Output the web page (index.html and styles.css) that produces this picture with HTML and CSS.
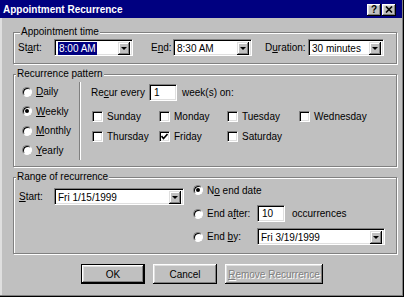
FILE: index.html
```html
<!DOCTYPE html>
<html lang="en">
<head>
    <meta charset="UTF-8">
    <meta name="viewport" content="width=device-width, initial-scale=1.0">
    <title>Appointment Recurrence</title>
    <link rel="stylesheet" href="styles.css">
</head>
<body>
    <div class="window">
        <div class="titlebar">
            <span class="title">Appointment Recurrence</span>
            <div class="title-buttons">
                <span class="tbtn">?</span>
                <span class="tbtn">
                    <svg width="8" height="7" viewBox="0 0 8 7"><path d="M1 0.5 L7 6.5 M7 0.5 L1 6.5" stroke="#000" stroke-width="1.6"/></svg>
                </span>
            </div>
        </div>

        <div class="content">
            <!-- Appointment time -->
            <div class="group">
                <div class="legend">Appointment time</div>
                <div class="time-row">
                    <span class="lbl lbl-start">St<u>a</u>rt:</span>
                    <div class="combo w79">
                        <span class="combo-text"><span class="selected">8:00 AM</span></span>
                        <span class="drop"></span>
                    </div>
                    <span class="lbl lbl-end">E<u>n</u>d:</span>
                    <div class="combo w79">
                        <span class="combo-text">8:30 AM</span>
                        <span class="drop"></span>
                    </div>
                    <span class="lbl lbl-duration">D<u>u</u>ration:</span>
                    <div class="combo w76">
                        <span class="combo-text">30 minutes</span>
                        <span class="drop"></span>
                    </div>
                </div>
            </div>

            <!-- Recurrence pattern -->
            <div class="group group-pattern">
                <div class="legend">Recurrence pattern</div>
                <div class="pattern-body">
                    <div class="freq">
                        <div class="opt"><span class="radio"></span><span><u>D</u>aily</span></div>
                        <div class="opt"><span class="radio checked"></span><span><u>W</u>eekly</span></div>
                        <div class="opt"><span class="radio"></span><span><u>M</u>onthly</span></div>
                        <div class="opt"><span class="radio"></span><span><u>Y</u>early</span></div>
                    </div>
                    <div class="sep"></div>
                    <div class="pattern-right">
                        <div class="recur-row">
                            <span class="lbl-recur">Re<u>c</u>ur every</span>
                            <div class="field w28">1</div>
                            <span class="weeks">week(s) on:</span>
                        </div>
                        <div class="days">
                            <div class="day"><span class="check"></span>Sunday</div>
                            <div class="day"><span class="check"></span>Monday</div>
                            <div class="day"><span class="check"></span>Tuesday</div>
                            <div class="day"><span class="check"></span>Wednesday</div>
                            <div class="day"><span class="check"></span>Thursday</div>
                            <div class="day">
                                <span class="check">
                                    <svg width="7" height="7" viewBox="0 0 7 7"><path d="M0.5 3 L2.5 5.5 L6.5 1" fill="none" stroke="#000" stroke-width="1.6"/></svg>
                                </span>Friday
                            </div>
                            <div class="day"><span class="check"></span>Saturday</div>
                        </div>
                    </div>
                </div>
            </div>

            <!-- Range of recurrence -->
            <div class="group group-range">
                <div class="legend">Range of recurrence</div>
                <div class="range-body">
                    <div class="range-left">
                        <span class="lbl lbl-start"><u>S</u>tart:</span>
                        <div class="combo w130">
                            <span class="combo-text">Fri 1/15/1999</span>
                            <span class="drop"></span>
                        </div>
                    </div>
                    <div class="range-right">
                        <div class="end-row row-first">
                            <span class="radio checked"></span>
                            <span>N<u>o</u> end date</span>
                        </div>
                        <div class="end-row row-after">
                            <span class="radio"></span>
                            <span class="lbl-end-opt">End a<u>f</u>ter:</span>
                            <div class="field w28">10</div>
                            <span class="occ">occurrences</span>
                        </div>
                        <div class="end-row row-by">
                            <span class="radio"></span>
                            <span class="lbl-end-opt">End <u>b</u>y:</span>
                            <div class="combo w128">
                                <span class="combo-text">Fri 3/19/1999</span>
                                <span class="drop"></span>
                            </div>
                        </div>
                    </div>
                </div>
            </div>

            <div class="buttons">
                <div class="btn default">OK</div>
                <div class="btn">Cancel</div>
                <div class="btn disabled wide"><span><u>R</u>emove Recurrence</span></div>
            </div>
        </div>
    </div>
</body>
</html>
```

FILE: styles.css
```css
body {
    margin: 0;
    font-family: "Liberation Sans", Arial, sans-serif;
    font-size: 10px;
    color: #000;
    background: #c0c0c0;
}
u {
    text-decoration: underline;
    text-underline-offset: 1px;
}
.window {
    width: 404px;
    height: 297px;
    box-sizing: border-box;
    padding: 0 2px 2px 0;
    background: #c0c0c0;
    box-shadow: inset -1px -1px 0 #000, inset -2px -2px 0 #808080, inset 2px 0 0 #dfdfdf;
}
.titlebar {
    height: 18px;
    background: #000080;
    display: flex;
    align-items: center;
    justify-content: space-between;
    padding: 0 6px 0 3px;
}
.title {
    color: #fff;
    font-weight: bold;
    font-size: 10px;
    padding-top: 1px;
}
.title-buttons {
    display: flex;
    gap: 1px;
    padding-top: 1px;
}
.tbtn {
    width: 14px;
    height: 12px;
    box-sizing: border-box;
    background: #c0c0c0;
    box-shadow: inset -1px -1px 0 #000, inset 1px 1px 0 #fff, inset -2px -2px 0 #808080, inset 2px 2px 0 #dfdfdf;
    display: flex;
    align-items: center;
    justify-content: center;
    font-weight: bold;
    font-size: 10px;
    line-height: 10px;
}
.content {
    padding: 14px 5px 0 13px;
}
.group {
    border: 1px solid #808080;
    box-shadow: 1px 1px 0 #fff, inset 1px 1px 0 #fff;
    padding: 0 0 7px 4px;
}
.legend {
    margin: -7px 0 0 2px;
    padding: 0 1px;
    width: max-content;
    line-height: 12px;
    background: #c0c0c0;
}

/* sunken controls */
.combo, .field {
    height: 17px;
    box-sizing: border-box;
    background: #fff;
    border: 1px solid;
    border-color: #808080 #fff #fff #808080;
    box-shadow: inset 1px 1px 0 #000, inset -1px -1px 0 #dfdfdf;
}
.combo {
    display: flex;
    padding: 2px;
}
.combo-text {
    flex: 1;
    line-height: 13px;
    padding-left: 1px;
    white-space: nowrap;
}
.selected {
    background: #000080;
    color: #fff;
    padding: 1px 1px;
}
.drop {
    width: 12px;
    height: 13px;
    box-sizing: border-box;
    background: #c0c0c0;
    box-shadow: inset -1px -1px 0 #000, inset 1px 1px 0 #dfdfdf, inset -2px -2px 0 #808080, inset 2px 2px 0 #fff;
    display: flex;
    align-items: center;
    justify-content: center;
}
.drop::before {
    content: "";
    border-left: 3px solid transparent;
    border-right: 3px solid transparent;
    border-top: 3px solid #000;
}
.field {
    line-height: 13px;
    padding: 1px 0 0 4px;
}
.w28 { width: 28px; }
.w76 { width: 76px; }
.w79 { width: 79px; }
.w128 { width: 128px; }
.w130 { width: 130px; }

/* appointment time */
.time-row {
    display: flex;
    align-items: center;
    height: 17px;
    margin-top: 1px;
}
.lbl-start { width: 36px; }
.lbl-end { width: 22px; margin-left: 18px; }
.lbl-duration { width: 43px; margin-left: 13px; }
.group-range .lbl-start { width: 35px; }

/* recurrence pattern */
.group-pattern {
    margin-top: 10px;
    padding: 0;
}
.pattern-body {
    display: flex;
    margin-top: 2px;
}
.freq {
    width: 65px;
    box-sizing: border-box;
    padding-left: 8px;
}
.opt {
    height: 19.5px;
    display: flex;
    align-items: center;
}
.radio {
    width: 10px;
    height: 10px;
    box-sizing: border-box;
    border-radius: 50%;
    background: #fff;
    border: 1px solid;
    border-color: #808080 #fff #fff #808080;
    box-shadow: inset 1px 1px 0 #000;
    margin-right: 4px;
    display: flex;
    align-items: center;
    justify-content: center;
}
.radio.checked::after {
    content: "";
    width: 4px;
    height: 4px;
    border-radius: 50%;
    background: #000;
}
.sep {
    width: 0;
    height: 78px;
    border-left: 1px solid #808080;
    border-right: 1px solid #fff;
    margin-bottom: 6px;
}
.pattern-right {
    padding-left: 10px;
}
.recur-row {
    display: flex;
    align-items: center;
    margin-top: 2px;
}
.lbl-recur { width: 58px; }
.weeks { margin-left: 5px; }
.days {
    display: grid;
    grid-template-columns: 67px 68px 72px auto;
    grid-auto-rows: 20px;
    margin-top: 5px;
    padding-left: 1px;
}
.day {
    display: flex;
    align-items: center;
}
.check {
    width: 11px;
    height: 11px;
    box-sizing: border-box;
    background: #fff;
    border: 1px solid;
    border-color: #808080 #fff #fff #808080;
    box-shadow: inset 1px 1px 0 #000, inset -1px -1px 0 #dfdfdf;
    margin-right: 4px;
    display: flex;
    align-items: center;
    justify-content: center;
}

/* range of recurrence */
.group-range {
    margin-top: 10px;
    padding: 0 0 8px 0;
}
.range-body {
    display: flex;
}
.range-left {
    display: flex;
    align-items: center;
    height: 17px;
    margin-top: 5px;
    padding-left: 5px;
}
.range-right {
    margin-left: 9px;
}
.end-row {
    display: flex;
    align-items: center;
}
.row-first { height: 14px; }
.row-after { height: 17px; margin-top: 8px; }
.row-by { height: 17px; margin-top: 6px; }
.lbl-end-opt { width: 50px; }
.occ { margin-left: 7px; }

/* dialog buttons */
.buttons {
    display: flex;
    justify-content: center;
    gap: 8px;
    margin-top: 10px;
    padding-right: 6px;
}
.btn {
    width: 64px;
    height: 20px;
    box-sizing: border-box;
    background: #c0c0c0;
    box-shadow: inset -1px -1px 0 #000, inset 1px 1px 0 #fff, inset -2px -2px 0 #808080, inset 2px 2px 0 #dfdfdf;
    display: flex;
    align-items: center;
    justify-content: center;
}
.btn.default {
    border: 1px solid #000;
}
.btn.wide {
    width: 98px;
}
.btn.disabled {
    color: #808080;
    text-shadow: 1px 1px 0 #fff;
}
```
